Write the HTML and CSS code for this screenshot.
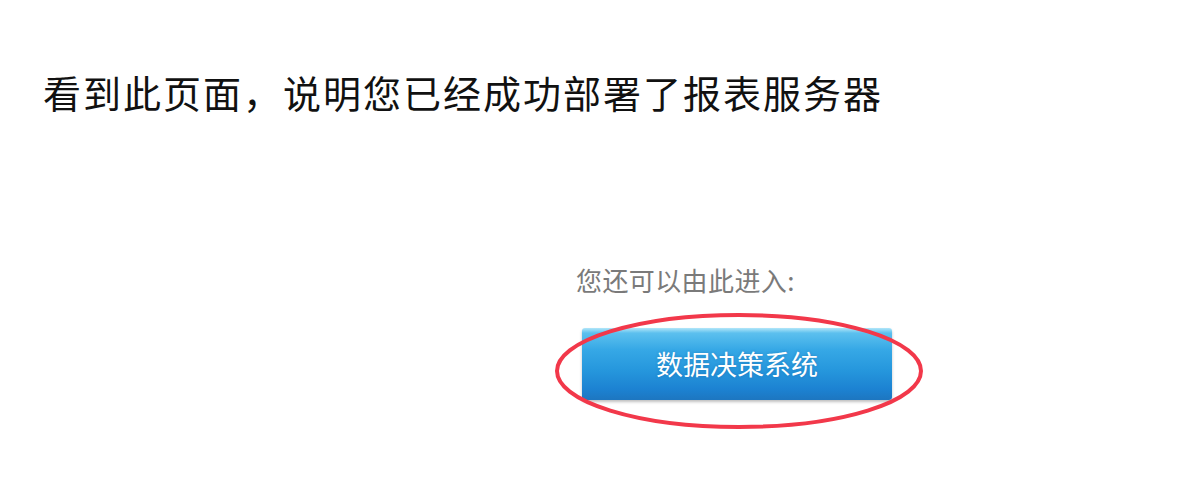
FILE: index.html
```html
<!DOCTYPE html>
<html lang="zh-CN">
<head>
    <meta charset="UTF-8">
    <title>报表服务器</title>
    <link rel="stylesheet" href="styles.css">
</head>
<body>
    <h1 class="title">看到此页面，说明您已经成功部署了报表服务器</h1>

    <div class="entry">
        <p class="entry-tip">您还可以由此进入:</p>
        <div class="entry-btn-wrap">
            <a class="entry-btn" href="#">数据决策系统</a>
            <svg class="mark" width="372" height="120" viewBox="0 0 372 120">
                <ellipse cx="186" cy="58" rx="182" ry="56" fill="none" stroke="#f2384a" stroke-width="4"/>
            </svg>
        </div>
    </div>
</body>
</html>
```

FILE: styles.css
```css
html, body {
    min-height: 100%;
}

body {
    margin: 0;
    padding: 0 0 60px;
    background-color: #ffffff;
    font-family: "Noto Sans CJK SC", "DejaVu Sans", sans-serif;
}

.title {
    margin: 0;
    padding: 66px 0 0 43px;
    font-size: 38px;
    font-weight: normal;
    line-height: 52px;
    color: #111111;
    letter-spacing: 2px;
}

.entry {
    padding: 145px 0 0 576px;
}

.entry-tip {
    margin: 0;
    font-size: 26px;
    line-height: 34px;
    letter-spacing: 0.4px;
    color: #7a7a7a;
}

.entry-btn-wrap {
    position: relative;
    width: 310px;
    margin: 31px 0 0 6px;
}

.entry-btn {
    display: block;
    width: 310px;
    height: 72px;
    line-height: 72px;
    text-align: center;
    color: #ffffff;
    font-size: 27px;
    text-decoration: none;
    border-radius: 3px;
    background: linear-gradient(to bottom, #b2e6f9 0%, #5cc0ee 7%, #36a8e6 30%, #2596dc 60%, #1c82d2 85%, #1d76c0 100%);
    box-shadow: 0 2px 3px rgba(0, 0, 0, 0.25);
    text-shadow: 0 0 3px rgba(0, 60, 120, 0.3);
}

.mark {
    position: absolute;
    left: -29px;
    top: -15px;
    overflow: visible;
    pointer-events: none;
}
```
